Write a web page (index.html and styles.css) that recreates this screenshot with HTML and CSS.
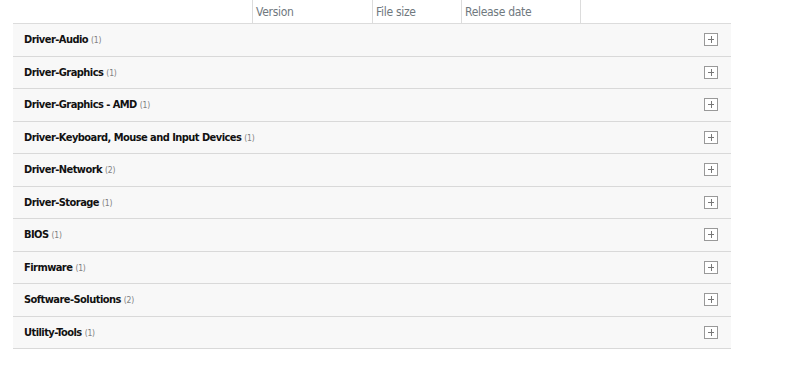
FILE: index.html
```html
<html>
  <head>
    <title>Software and Drivers</title>
    <link rel="stylesheet" href="styles.css">
  </head>
  <body>
    <div class="drivers">
      <div class="head">
        <div class="col"></div>
        <div class="col">Version</div>
        <div class="col">File size</div>
        <div class="col">Release date</div>
        <div class="col last"></div>
      </div>

      <div class="row"><span class="name">Driver-Audio</span><span class="count">(1)</span><span class="plus"></span></div>
      <div class="row"><span class="name">Driver-Graphics</span><span class="count">(1)</span><span class="plus"></span></div>
      <div class="row"><span class="name">Driver-Graphics - AMD</span><span class="count">(1)</span><span class="plus"></span></div>
      <div class="row"><span class="name">Driver-Keyboard, Mouse and Input Devices</span><span class="count">(1)</span><span class="plus"></span></div>
      <div class="row"><span class="name">Driver-Network</span><span class="count">(2)</span><span class="plus"></span></div>
      <div class="row"><span class="name">Driver-Storage</span><span class="count">(1)</span><span class="plus"></span></div>
      <div class="row"><span class="name">BIOS</span><span class="count">(1)</span><span class="plus"></span></div>
      <div class="row"><span class="name">Firmware</span><span class="count">(1)</span><span class="plus"></span></div>
      <div class="row"><span class="name">Software-Solutions</span><span class="count">(2)</span><span class="plus"></span></div>
      <div class="row"><span class="name">Utility-Tools</span><span class="count">(1)</span><span class="plus"></span></div>
    </div>
  </body>
</html>
```

FILE: styles.css
```css
body {
    margin: 0;
    padding: 0;
    background: #fff;
    font-family: "DejaVu Sans Condensed", "DejaVu Sans", sans-serif;
}

.drivers {
    width: 718px;
    margin-left: 13px;
}

.head {
    display: grid;
    grid-template-columns: 239px 120px 89px 119px 1fr;
    height: 23px;
    border-bottom: 1px solid #dcdcdc;
}

.head .col {
    border-left: 1px solid #dcdcdc;
    padding-left: 3px;
    font-size: 12px;
    letter-spacing: -0.3px;
    color: #6f787e;
    line-height: 24px;
}

.head .col:first-child {
    border-left: none;
}

.row {
    display: flex;
    align-items: center;
    height: 31.5px;
    padding: 0 13px 0 11px;
    background: #f8f8f8;
    border-bottom: 1px solid #d9d9d9;
}

.name {
    font-weight: bold;
    font-size: 11px;
    letter-spacing: -0.55px;
    color: #111;
}

.count {
    font-size: 8.5px;
    letter-spacing: -0.2px;
    color: #808080;
    margin-left: 3px;
    padding-top: 1px;
}

.plus {
    margin-left: auto;
    width: 12px;
    height: 11px;
    border: 1px solid #999;
    background: #fff;
    position: relative;
}

.plus:before, .plus:after {
    content: "";
    position: absolute;
    background: #777;
}

.plus:before {
    left: 3px;
    top: 5px;
    width: 6px;
    height: 1px;
}

.plus:after {
    left: 6px;
    top: 2px;
    width: 1px;
    height: 7px;
}
```
